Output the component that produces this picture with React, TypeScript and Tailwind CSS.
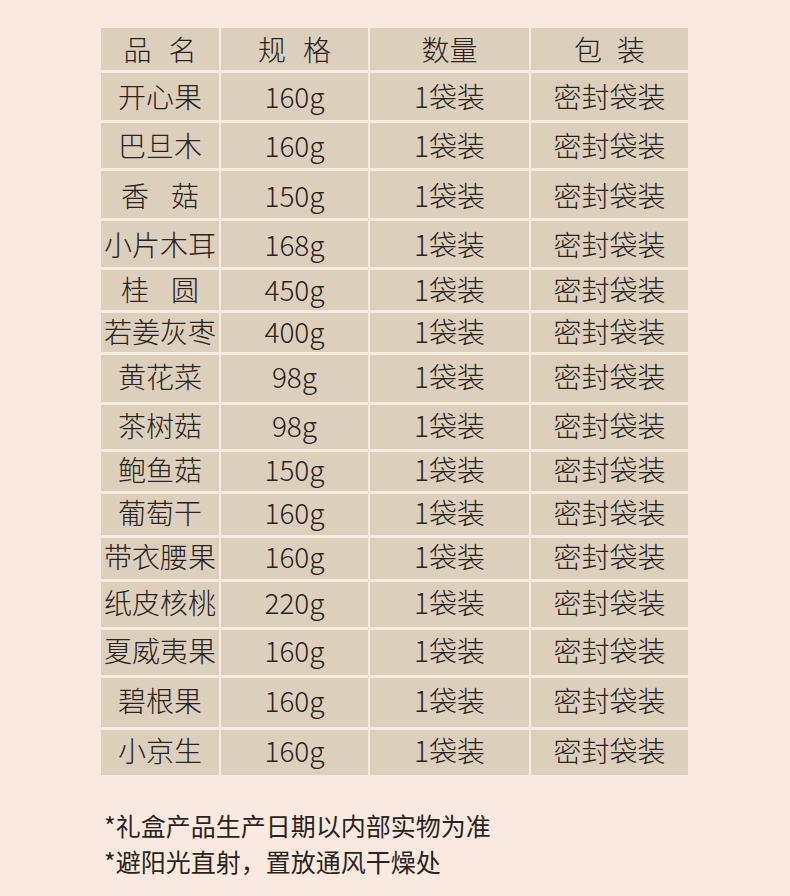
import React from "react";

const rows: { name: string[]; spec: string; h: string; pb: string }[] = [
  { name: ["开心果"], spec: "160g", h: "h-[47px]", pb: "pb-[1px]" },
  { name: ["巴旦木"], spec: "160g", h: "h-[45px]", pb: "pb-[1px]" },
  { name: ["香", "菇"], spec: "150g", h: "h-[47px]", pb: "pb-0" },
  { name: ["小片木耳"], spec: "168g", h: "h-[46px]", pb: "pb-[1px]" },
  { name: ["桂", "圆"], spec: "450g", h: "h-[40px]", pb: "pb-[3px]" },
  { name: ["若姜灰枣"], spec: "400g", h: "h-[39px]", pb: "pb-[3px]" },
  { name: ["黄花菜"], spec: "98g", h: "h-[47px]", pb: "pb-[5px]" },
  { name: ["茶树菇"], spec: "98g", h: "h-[44px]", pb: "pb-[5px]" },
  { name: ["鲍鱼菇"], spec: "150g", h: "h-[39px]", pb: "pb-[5px]" },
  { name: ["葡萄干"], spec: "160g", h: "h-[41px]", pb: "pb-[5px]" },
  { name: ["带衣腰果"], spec: "160g", h: "h-[41px]", pb: "pb-[5px]" },
  { name: ["纸皮核桃"], spec: "220g", h: "h-[45px]", pb: "pb-[5px]" },
  { name: ["夏威夷果"], spec: "160g", h: "h-[45px]", pb: "pb-[6px]" },
  { name: ["碧根果"], spec: "160g", h: "h-[49px]", pb: "pb-[6px]" },
  { name: ["小京生"], spec: "160g", h: "h-[45px]", pb: "pb-[6px]" },
];

const font = {
  fontFamily: '"Noto Sans CJK SC", "Noto Sans", sans-serif',
};

function Cell({
  w,
  children,
  gap,
  pb,
}: {
  w: string;
  children: React.ReactNode;
  gap?: string;
  pb?: string;
}) {
  return (
    <div
      className={`${w} bg-[#dccfbc] flex items-center justify-center ${gap ?? ""} ${pb ?? ""}`}
    >
      {children}
    </div>
  );
}

export default function App() {
  return (
    <div
      className="w-[790px] h-[896px] bg-[#fae9df] text-[#2a2320] pt-[28px] pl-[101px] font-light"
      style={font}
    >
      <div className="flex flex-col gap-[3px] w-[587px] text-[28px] leading-none">
        <div className="flex gap-[2px] h-[42px]">
          <Cell w="w-[118px]" gap="gap-[17px]">
            <span>品</span>
            <span>名</span>
          </Cell>
          <Cell w="w-[147px]" gap="gap-[17px]">
            <span>规</span>
            <span>格</span>
          </Cell>
          <Cell w="w-[159px]">
            <span>数量</span>
          </Cell>
          <Cell w="w-[157px]" gap="gap-[15px]">
            <span>包</span>
            <span>装</span>
          </Cell>
        </div>
        {rows.map((r, i) => (
          <div key={i} className={`flex gap-[2px] ${r.h}`}>
            <Cell w="w-[118px]" gap="gap-[22px]" pb={r.pb}>
              {r.name.map((n, j) => (
                <span key={j}>{n}</span>
              ))}
            </Cell>
            <Cell w="w-[147px]" pb={r.pb}>
              <span>{r.spec}</span>
            </Cell>
            <Cell w="w-[159px]" pb={r.pb}>
              <span>1袋装</span>
            </Cell>
            <Cell w="w-[157px]" pb={r.pb}>
              <span>密封袋装</span>
            </Cell>
          </div>
        ))}
      </div>
      <div className="mt-[32px] pl-[3px] text-[25px] leading-[36px] text-[#2b2421] font-normal">
        <div>*礼盒产品生产日期以内部实物为准</div>
        <div>*避阳光直射，置放通风干燥处</div>
      </div>
    </div>
  );
}
